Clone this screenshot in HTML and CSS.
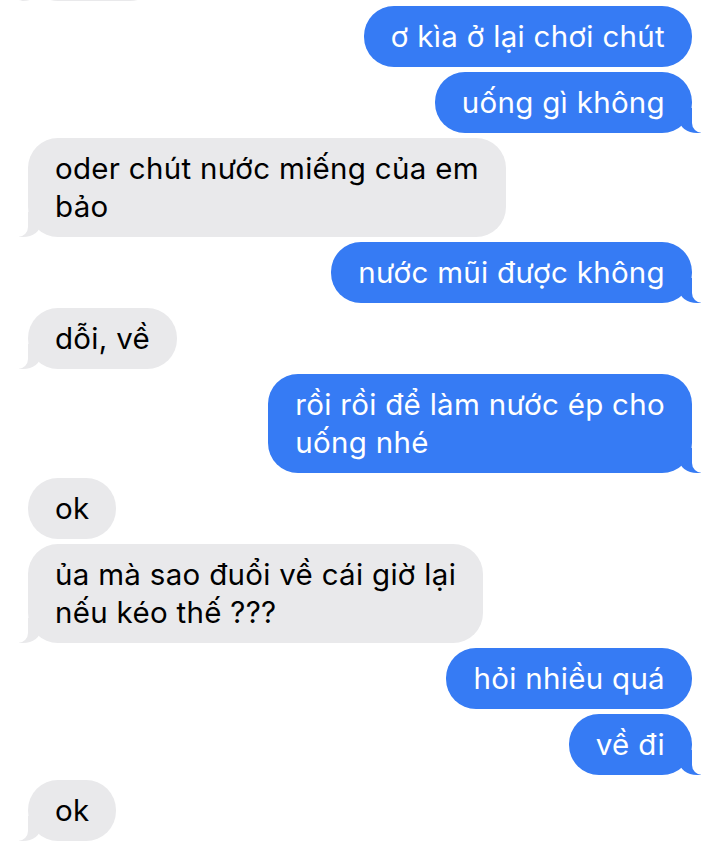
FILE: index.html
```html
<!DOCTYPE html>
<html lang="vi">
<head>
<meta charset="utf-8">
<title>Tin nhắn</title>
<link rel="stylesheet" href="styles.css">
</head>
<body>
<main class="thread">
  <div class="bubble in tail stub">&nbsp;</div>
  <div class="bubble out">ơ kìa ở lại chơi chút</div>
  <div class="bubble out tail">uống gì không</div>
  <div class="bubble in tail">oder chút nước miếng của em<br>bảo</div>
  <div class="bubble out tail">nước mũi được không</div>
  <div class="bubble in tail">dỗi, về</div>
  <div class="bubble out tail">rồi rồi để làm nước ép cho<br>uống nhé</div>
  <div class="bubble in">ok</div>
  <div class="bubble in tail">ủa mà sao đuổi về cái giờ lại<br>nếu kéo thế ???</div>
  <div class="bubble out">hỏi nhiều quá</div>
  <div class="bubble out tail">về đi</div>
  <div class="bubble in tail">ok</div>
</main>
</body>
</html>
```
FILE: styles.css
```css
html, body {
  margin: 0;
  padding: 0;
  background: #ffffff;
}
body {
  width: 719px;
  height: 845px;
  overflow: hidden;
  font-family: Inter, "Liberation Sans", Arial, sans-serif;
}
.thread {
  display: flex;
  flex-direction: column;
  gap: 5px;
  padding: 0 27px 0 28px;
  margin-top: -60px;
}
.bubble {
  position: relative;
  max-width: 500px;
  padding: 10.5px 27px 12.5px;
  border-radius: 30px;
  font-size: 29.5px;
  line-height: 38px;
  letter-spacing: 0.3px;
  white-space: nowrap;
}
.out {
  align-self: flex-end;
  background: #367bf4;
  color: #ffffff;
}
.in {
  align-self: flex-start;
  background: #e9e9eb;
  color: #000000;
}
.stub {
  width: 78px;
}
.tail.out::before,
.tail.out::after,
.tail.in::before,
.tail.in::after {
  content: "";
  position: absolute;
  bottom: 0;
  height: 25px;
}
.tail.out::before {
  right: -9px;
  width: 22px;
  background: #367bf4;
  border-bottom-left-radius: 18px 14px;
}
.tail.out::after {
  right: -26px;
  width: 26px;
  background: #ffffff;
  border-bottom-left-radius: 10px;
}
.tail.in::before {
  left: -9px;
  width: 22px;
  background: #e9e9eb;
  border-bottom-right-radius: 18px 14px;
}
.tail.in::after {
  left: -26px;
  width: 26px;
  background: #ffffff;
  border-bottom-right-radius: 10px;
}
```
